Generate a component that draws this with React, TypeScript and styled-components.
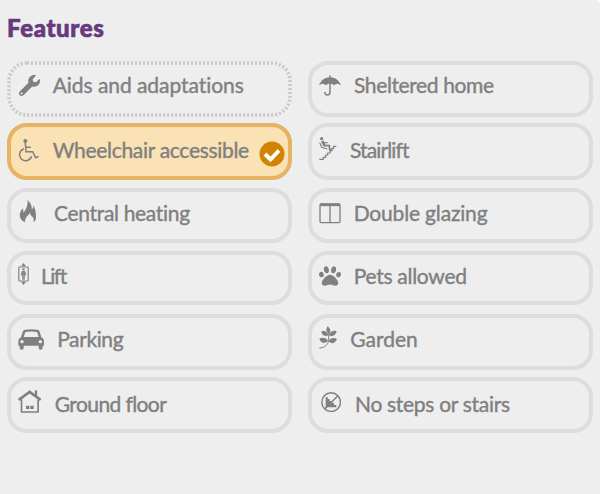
import React from "react";
import styled, { createGlobalStyle } from "styled-components";
import { FaPaw, FaWrench } from "react-icons/fa";

const GlobalStyle = createGlobalStyle`
  * { box-sizing: border-box; }
  body { margin: 0; background: #fff; }
`;

const Panel = styled.main`
  width: 600px;
  height: 494px;
  padding: 13px 7px 0;
  background: #eeeeee;
  border-top-right-radius: 5px;
  overflow: hidden;
  font-family: Lato, "Liberation Sans", sans-serif;
`;

const Title = styled.h2`
  margin: 0;
  height: 48px;
  color: #673a7e;
  font-size: 24px;
  font-weight: 900;
  line-height: 30px;
  letter-spacing: 0.65px;
  white-space: nowrap;
  -webkit-text-stroke: 0.7px #673a7e;
`;

const Grid = styled.div`
  display: grid;
  grid-template-columns: 285px 285px;
  grid-template-rows: 62px 65px 63px 63px 63px 56px;
  column-gap: 16px;
`;

const tones = {
  idle: { line: "#dddddd", fill: "#eeeeee" },
  focused: { line: "transparent", fill: "#eeeeee" },
  selected: { line: "#e6b363", fill: "#fae2b4" },
};

type Tone = keyof typeof tones;

const OptionBox = styled.button<{ $tone: Tone; $height: number }>`
  position: relative;
  display: flex;
  align-items: flex-start;
  height: ${(p) => p.$height}px;
  margin: 0;
  padding: 0;
  border: 4px solid ${(p) => tones[p.$tone].line};
  border-radius: 20px;
  background: ${(p) => tones[p.$tone].fill};
  color: #808080;
  font: inherit;
  text-align: left;
`;

const DottedRing = styled.svg`
  position: absolute;
  inset: -4px;
  width: 285px;
  height: 56px;
  pointer-events: none;
`;

const IconSlot = styled.span<{ $x: number; $y: number; $w: number; $h: number }>`
  display: flex;
  flex: none;
  width: ${(p) => p.$w}px;
  height: ${(p) => p.$h}px;
  margin: ${(p) => p.$y}px 0 0 ${(p) => p.$x}px;

  svg {
    display: block;
    width: 100%;
    height: 100%;
  }
`;

const Label = styled.span<{ $gap: number; $top: number; $spacing: number }>`
  margin: ${(p) => p.$top}px 0 0 ${(p) => p.$gap}px;
  font-size: 21px;
  line-height: 26px;
  letter-spacing: ${(p) => p.$spacing}px;
  font-variant-ligatures: none;
  white-space: nowrap;
  -webkit-text-stroke: 0.4px #808080;
`;

const CheckBadge = styled.svg`
  position: absolute;
  top: 14px;
  right: 3px;
  width: 26px;
  height: 26px;
`;

const line = { fill: "none", stroke: "currentColor" } as const;

const Umbrella = () => (
  <svg viewBox="0 0 66 63" fill="currentColor">
    <path d="M0 31C6 16 17 8 31 7V1H35V7C49 8 60 16 66 31C58 25 51 25 45 31C41 27 37 26 33 26C29 26 25 27 21 31C15 25 8 25 0 31Z" />
    <path d="M33 24V51Q33 60 25 60Q18 60 17 51" {...line} strokeWidth={4.5} />
  </svg>
);

const Wheelchair = () => (
  <svg viewBox="0 0 64 68" {...line} strokeWidth={4.5}>
    <circle cx="22" cy="6" r="6" fill="currentColor" stroke="none" />
    <path d="M22 11L24 38H44L53 56L62 52M23 25H39" />
    <path d="M18 29A18.500 18.500 0 1 0 41 52" />
  </svg>
);

const Flame = () => (
  <svg viewBox="0 0 54 68" fill="currentColor">
    <path d="M18 67C4 60 -1 47 4 36C6 32 9 29 10 25C13 29 14 33 13 38C22 28 28 15 25 0C34 7 39 16 38 28C42 26 44 21 43 15C50 27 51 42 51 54C50 61 47 64 43 66C46 58 43 51 37 48C34 45 33 41 33 37C31 46 17 50 18 67Z" />
  </svg>
);

const Lift = () => (
  <svg viewBox="0 0 33 66" {...line} strokeWidth={3.5}>
    <rect x="2.500" y="12" width="28" height="42" rx="2" />
    <path d="M16.500 0L24 10H9ZM16.500 66L24 56H9Z" fill="currentColor" stroke="none" />
    <circle cx="16.500" cy="19" r="3.500" fill="currentColor" stroke="none" />
    <path d="M10 37L13 26H20L23 37M14.500 26V50M18.500 26V50" />
  </svg>
);

const Car = () => (
  <svg viewBox="0 0 80 63" fill="currentColor">
    <path
      fillRule="evenodd"
      d="M21 2Q40 -1 59 2Q63 3 65 8L70 25Q78 28 78 36V50H74V57Q74 62 68 62Q62 62 62 57V50H17V57Q17 62 11 62Q5 62 5 57V50H1V36Q1 28 9 25L14 8Q16 3 21 2ZM22 9L17 24H62L57 9Q40 6 22 9ZM12 33A5 5 0 1 0 12 43A5 5 0 1 0 12 33ZM67 33A5 5 0 1 0 67 43A5 5 0 1 0 67 33Z"
    />
  </svg>
);

const House = () => (
  <svg viewBox="0 0 70 69" {...line} strokeWidth={5}>
    <path d="M2 30L35 6L68 30" strokeWidth={8} />
    <path d="M54 1V20" strokeWidth={7} />
    <path d="M10.500 28V66H60.500V28" strokeLinejoin="round" />
    <path d="M24 47H34V57H24ZM37 47H47V57H37Z" fill="currentColor" stroke="none" />
  </svg>
);

const Stairlift = () => (
  <svg viewBox="0 0 54 69" {...line} strokeWidth={3.5}>
    <circle cx="8" cy="5" r="4.800" fill="currentColor" stroke="none" />
    <path d="M10 12L16 25" strokeWidth={8} />
    <path d="M14 26H31L32 37H37" strokeWidth={5} />
    <path d="M16 17H26" />
    <path d="M2 17L8 31L25 36" />
    <path d="M1 67H13V61H20V54H26V48H33V41H39V34H44V28H52" />
  </svg>
);

const WindowPane = () => (
  <svg viewBox="0 0 66 63" {...line} strokeWidth={4}>
    <rect x="3" y="3" width="60" height="56" rx="4" />
    <path d="M3 5.500H63" strokeWidth={8} />
    <path d="M33 6V59" />
  </svg>
);

const Sprig = () => (
  <svg viewBox="0 0 54 69" fill="currentColor">
    <path d="M26 1C34 8 37 16 30 23C21 19 20 9 26 1ZM7 16C17 12 27 17 28 28C17 33 9 28 7 16ZM53 15C43 12 31 17 29 28C41 33 50 28 53 15ZM1 38C10 33 23 35 27 45C18 54 5 52 1 38ZM54 39C46 33 32 36 29 46C37 55 49 53 54 39Z" />
    <path d="M29 20V43C27 56 17 66 1 66" {...line} strokeWidth={3} />
  </svg>
);

const NoSteps = () => (
  <svg viewBox="0 0 61 61" {...line} strokeWidth={4.5}>
    <circle cx="30.500" cy="30.500" r="28" />
    <path d="M51 11L11 51" />
    <path d="M14 15H20V21H26V27H32V33H39V39H46V46H14Z" fill="currentColor" stroke="none" />
  </svg>
);

interface Feature {
  label: string;
  icon: React.ReactNode;
  /** Left, top, width and height of the icon inside its box. */
  box: [number, number, number, number];
  gap: number;
  spacing: number;
  tone?: Tone;
}

const rows: { height: number; top: number; items: Feature[] }[] = [
  {
    height: 56,
    top: 7,
    items: [
      { label: "Aids and adaptations", icon: <FaWrench />, box: [7.5, 10, 21, 21], gap: 13.2, spacing: -0.05, tone: "focused" },
      { label: "Sheltered home", icon: <Umbrella />, box: [7, 9.7, 22, 21], gap: 13, spacing: -0.38 },
    ],
  },
  {
    height: 57,
    top: 10,
    items: [
      { label: "Wheelchair accessible", icon: <Wheelchair />, box: [7, 12, 21.3, 22.7], gap: 13.4, spacing: -0.3, tone: "selected" },
      { label: "Stairlift", icon: <Stairlift />, box: [7, 10, 18, 23], gap: 13, spacing: -0.87 },
    ],
  },
  {
    height: 55,
    top: 8,
    items: [
      { label: "Central heating", icon: <Flame />, box: [8, 8, 18, 22.7], gap: 17, spacing: -0.32 },
      { label: "Double glazing", icon: <WindowPane />, box: [7, 10.5, 22, 21], gap: 12.7, spacing: -0.17 },
    ],
  },
  {
    height: 54,
    top: 8,
    items: [
      { label: "Lift", icon: <Lift />, box: [7, 8, 11, 22], gap: 12, spacing: -1.5 },
      { label: "Pets allowed", icon: <FaPaw />, box: [7, 10, 22, 22], gap: 12.7, spacing: -0.28 },
    ],
  },
  {
    height: 56,
    top: 8,
    items: [
      { label: "Parking", icon: <Car />, box: [7, 10.5, 26.7, 21], gap: 12.5, spacing: -0.38 },
      { label: "Garden", icon: <Sprig />, box: [6.5, 7.5, 18, 23], gap: 13.7, spacing: 0 },
    ],
  },
  {
    height: 56,
    top: 10,
    items: [
      { label: "Ground floor", icon: <House />, box: [7, 9, 23.3, 23], gap: 13.5, spacing: -0.6 },
      { label: "No steps or stairs", icon: <NoSteps />, box: [8.7, 10.5, 20.3, 20.3], gap: 14, spacing: -0.3 },
    ],
  },
];

export default function App() {
  return (
    <>
      <GlobalStyle />
      <Panel>
        <Title>Features</Title>
        <Grid>
          {rows.flatMap((row) =>
            row.items.map(({ label, icon, box: [x, y, w, h], gap, spacing, tone = "idle" }) => (
              <OptionBox key={label} type="button" $tone={tone} $height={row.height}>
                {tone === "focused" && (
                  <DottedRing viewBox="0 0 285 56" fill="none" stroke="#c9c9c9">
                    <rect x="2" y="2" width="281" height="52" rx="18" strokeWidth="3.600" strokeDasharray="2 2" />
                  </DottedRing>
                )}
                <IconSlot $x={x} $y={y} $w={w} $h={h}>{icon}</IconSlot>
                <Label $gap={gap} $top={row.top} $spacing={spacing}>{label}</Label>
                {tone === "selected" && (
                  <CheckBadge viewBox="0 0 26 26">
                    <circle cx="13" cy="13" r="12.500" fill="#d18402" />
                    <path d="M6 13L11.500 18.500L20 9.500" fill="none" stroke="#fff" strokeWidth="4" />
                  </CheckBadge>
                )}
              </OptionBox>
            )),
          )}
        </Grid>
      </Panel>
    </>
  );
}
